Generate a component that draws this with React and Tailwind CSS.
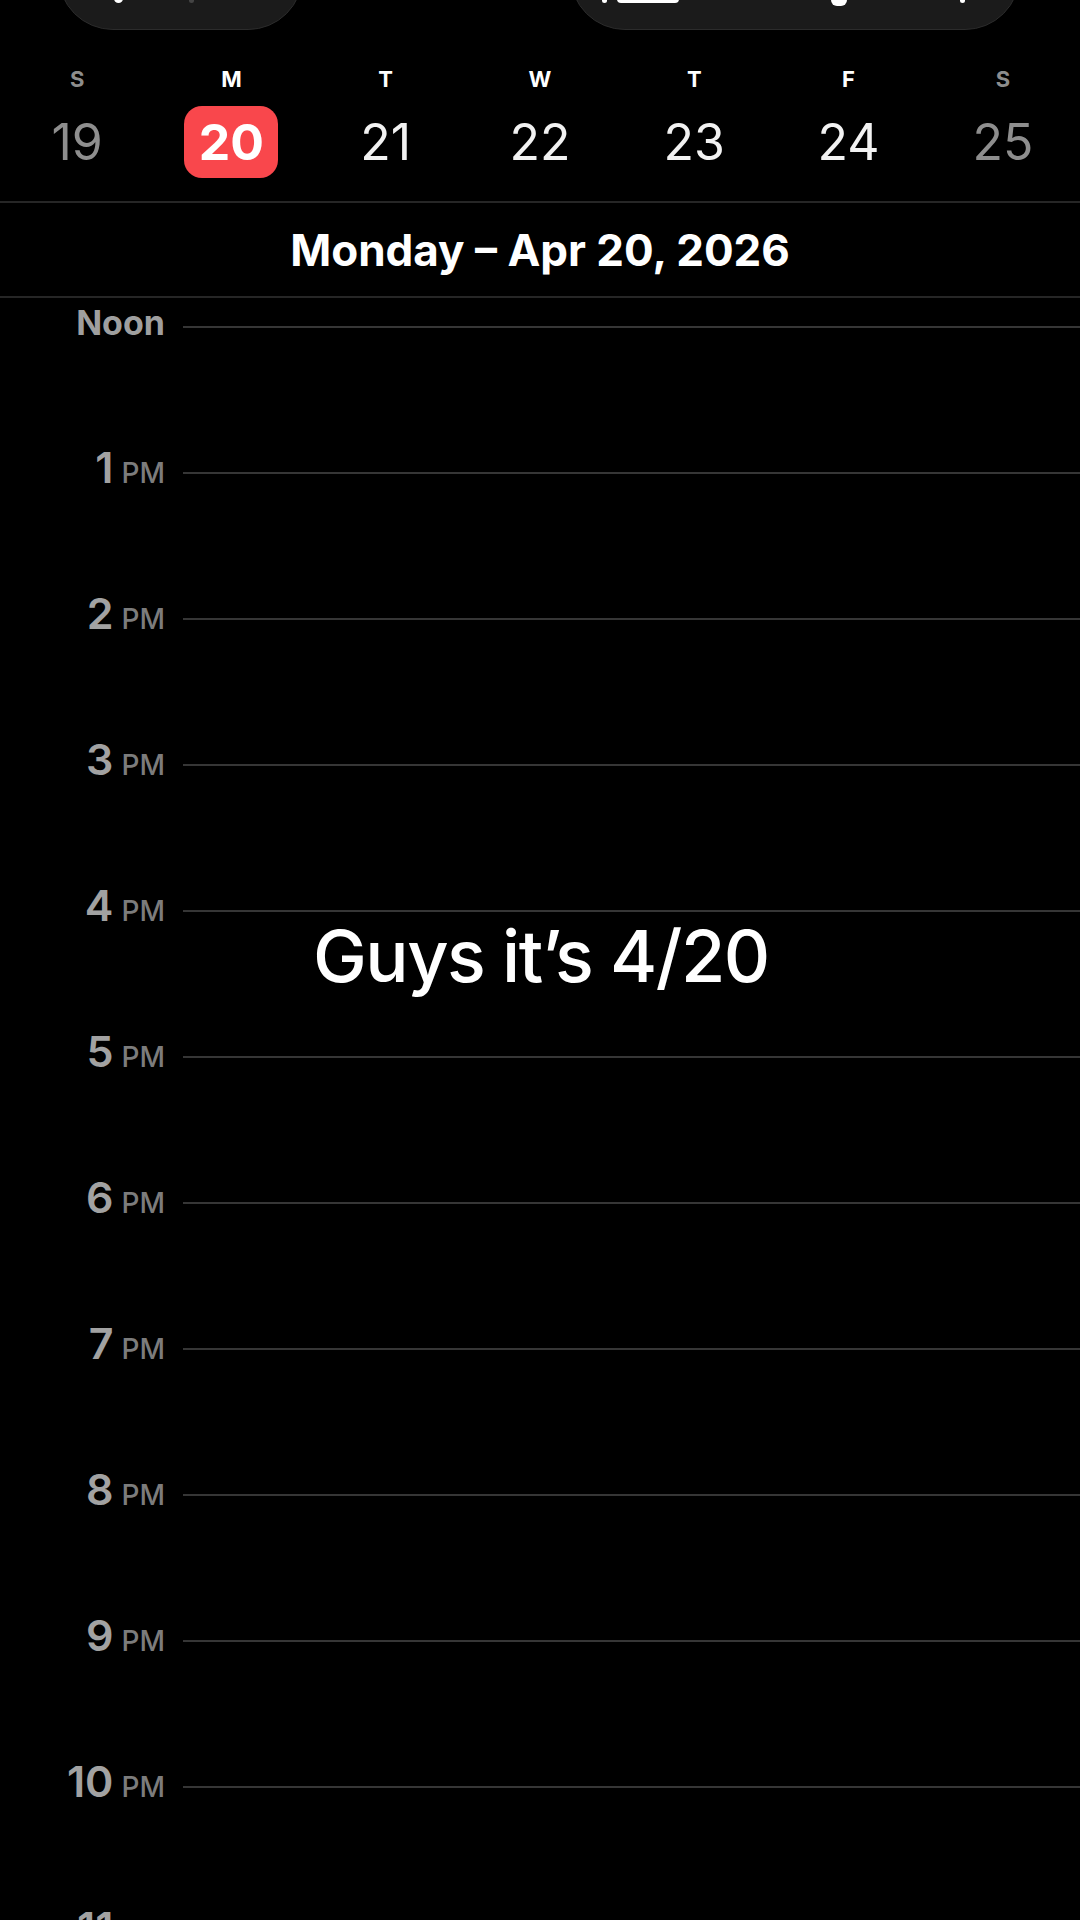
import React from 'react';

const days = [
  { letter: 'S', date: '19', weekend: true },
  { letter: 'M', date: '20', today: true },
  { letter: 'T', date: '21' },
  { letter: 'W', date: '22' },
  { letter: 'T', date: '23' },
  { letter: 'F', date: '24' },
  { letter: 'S', date: '25', weekend: true },
];

const hours = ['Noon', '1', '2', '3', '4', '5', '6', '7', '8', '9', '10', '11'];

const HourRow = ({ label, children }) => (
  <div className="h-[146px]">
    <div className="flex h-[45px] items-end">
      <div className="flex w-[165px] shrink-0 items-baseline justify-end">
        {label === 'Noon' ? (
          <span className="mb-[3px] text-[34px] font-bold leading-none text-[#9f9f9f]">Noon</span>
        ) : (
          <>
            <span className="text-[43px] font-semibold leading-none text-[#a2a2a2]">{label}</span>
            <span className="ml-[8px] text-[28px] font-medium leading-none text-[#7c7c7c]">PM</span>
          </>
        )}
      </div>
      <div className="mb-[15px] ml-[18px] h-[2px] flex-1 bg-[#363636]"></div>
    </div>
    {children}
  </div>
);

export default function App() {
  return (
    <div className="h-[1920px] w-[1080px] overflow-hidden bg-black font-[Inter,sans-serif] text-white">
      {/* top toolbar pills, mostly scrolled off */}
      <div className="flex h-[30px] items-end overflow-hidden pl-[58px]">
        <div className="flex h-[110px] w-[245px] shrink-0 items-end rounded-full border border-[#2c2c2c] bg-[#1b1b1b] pb-[26px]">
          <div className="ml-[55px] h-[12px] w-[9px] rounded-full bg-white"></div>
          <div className="ml-[66px] h-[10px] w-[5px] rounded-full bg-[#444]"></div>
        </div>
        <div className="ml-[267px] flex h-[110px] w-[450px] shrink-0 items-end rounded-full border border-[#2c2c2c] bg-[#1b1b1b] pb-[26px]">
          <div className="ml-[31px] h-[10px] w-[5px] rounded-full bg-white"></div>
          <div className="ml-[10px] h-[12px] w-[62px] rounded-[4px] bg-white"></div>
          <div className="ml-[152px] mb-[-3px] h-[12px] w-[16px] rounded-full bg-white"></div>
          <div className="ml-[113px] h-[10px] w-[5px] rounded-full bg-white"></div>
        </div>
      </div>

      {/* week strip */}
      <div className="grid grid-cols-7 pt-[38px]">
        {days.map((d, i) => (
          <div
            key={i}
            className={`text-center text-[22px] font-bold leading-none ${d.weekend ? 'text-[#8d8d8d]' : 'text-white'}`}
          >
            {d.letter}
          </div>
        ))}
      </div>
      <div className="mt-[16px] grid grid-cols-7">
        {days.map((d, i) => (
          <div key={i} className="flex justify-center">
            <div
              className={`flex h-[72px] w-[94px] items-center justify-center rounded-[18px] text-[50px] leading-none ${
                d.today ? 'bg-[#f9474c] font-bold text-white' : d.weekend ? 'text-[#8e8e8e]' : 'text-[#f2f2f2]'
              }`}
            >
              {d.date}
            </div>
          </div>
        ))}
      </div>
      <div className="mt-[23px] h-[2px] bg-[#262626]"></div>

      {/* day heading */}
      <div className="flex h-[93px] items-center justify-center text-[44px] font-bold leading-none">
        Monday – Apr 20, 2026
      </div>
      <div className="h-[2px] bg-[#262626]"></div>

      {/* timeline */}
      <div>
        {hours.map((h) => (
          <HourRow key={h} label={h}>
            {h === '4' && (
              <div className="-mt-[7px] pl-[313px] text-[72px] font-medium leading-none tracking-[-1.5px] text-white">
                Guys it’s 4/20
              </div>
            )}
          </HourRow>
        ))}
      </div>
    </div>
  );
}
